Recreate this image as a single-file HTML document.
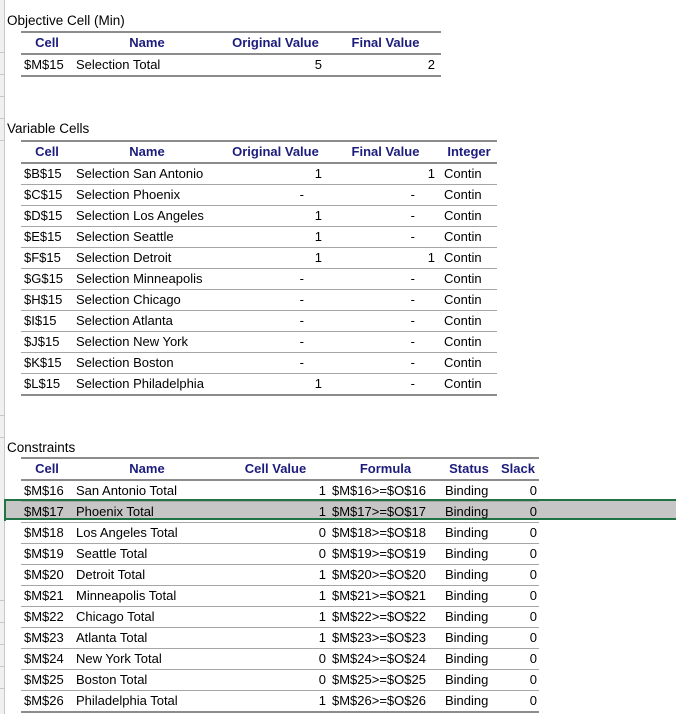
<!DOCTYPE html>
<html><head><meta charset="utf-8"><style>
body{margin:0;width:676px;height:714px;background:#fff;position:relative;overflow:hidden;font-family:"Liberation Sans",sans-serif;font-size:13px;color:#000}
.strip{position:absolute;left:0;top:0;width:4px;height:714px;background:#f0f0f0;border-right:1px solid #c8c8c8}
.tick{position:absolute;left:0;width:4px;height:1px;background:#c8c8c8}
.title{position:absolute;left:7px;font-size:13.5px}
table{position:absolute;left:21px;border-collapse:collapse;table-layout:fixed}
td{height:20px;padding:0;line-height:20px;white-space:nowrap;overflow:hidden;border-bottom:1px solid #a6a6a6}
tr.h td{color:#1c1c7c;font-weight:bold;text-align:center;border-top:2px solid #8c8c8c;border-bottom:2px solid #8c8c8c;height:19px}
tr.last td{border-bottom:2px solid #8c8c8c}
.r{text-align:right;padding-right:6px}
.l{padding-left:3px}
.d{text-align:right;padding-right:26px}
.sel{position:absolute;left:4px;top:499px;width:680px;height:21px;background:#c6c6c6;border-top:2px solid #217346;border-bottom:2px solid #217346;box-sizing:border-box}
.selh{position:absolute;left:4px;top:499px;width:2px;height:22px;background:#217346}
</style></head><body>
<div class="strip"></div>
<div class="tick" style="top:52px"></div><div class="tick" style="top:74px"></div><div class="tick" style="top:96px"></div><div class="tick" style="top:118px"></div><div class="tick" style="top:140px"></div><div class="tick" style="top:415px"></div><div class="tick" style="top:437px"></div><div class="tick" style="top:600px"></div><div class="tick" style="top:622px"></div><div class="tick" style="top:644px"></div><div class="tick" style="top:666px"></div><div class="tick" style="top:688px"></div>
<div class="sel"></div><div class="selh"></div>
<div class="title" style="top:13px">Objective Cell (Min)</div>
<table style="top:31px;width:420px">
<col style="width:52px"><col style="width:148px"><col style="width:109px"><col style="width:111px">
<tr class="h"><td>Cell</td><td>Name</td><td>Original Value</td><td>Final Value</td></tr>
<tr class="last"><td class="l">$M$15</td><td class="l">Selection Total</td><td class="r" style="padding-right:8px">5</td><td class="r">2</td></tr>
</table>
<div class="title" style="top:121px">Variable Cells</div>
<table style="top:140px;width:476px">
<col style="width:52px"><col style="width:148px"><col style="width:109px"><col style="width:111px"><col style="width:56px">
<tr class="h"><td>Cell</td><td>Name</td><td>Original Value</td><td>Final Value</td><td>Integer</td></tr>
<tr><td class="l">$B$15</td><td class="l">Selection San Antonio</td><td class="r" style="padding-right:8px">1</td><td class="r">1</td><td class="l">Contin</td></tr>
<tr><td class="l">$C$15</td><td class="l">Selection Phoenix</td><td class="d">-</td><td class="d">-</td><td class="l">Contin</td></tr>
<tr><td class="l">$D$15</td><td class="l">Selection Los Angeles</td><td class="r" style="padding-right:8px">1</td><td class="d">-</td><td class="l">Contin</td></tr>
<tr><td class="l">$E$15</td><td class="l">Selection Seattle</td><td class="r" style="padding-right:8px">1</td><td class="d">-</td><td class="l">Contin</td></tr>
<tr><td class="l">$F$15</td><td class="l">Selection Detroit</td><td class="r" style="padding-right:8px">1</td><td class="r">1</td><td class="l">Contin</td></tr>
<tr><td class="l">$G$15</td><td class="l">Selection Minneapolis</td><td class="d">-</td><td class="d">-</td><td class="l">Contin</td></tr>
<tr><td class="l">$H$15</td><td class="l">Selection Chicago</td><td class="d">-</td><td class="d">-</td><td class="l">Contin</td></tr>
<tr><td class="l">$I$15</td><td class="l">Selection Atlanta</td><td class="d">-</td><td class="d">-</td><td class="l">Contin</td></tr>
<tr><td class="l">$J$15</td><td class="l">Selection New York</td><td class="d">-</td><td class="d">-</td><td class="l">Contin</td></tr>
<tr><td class="l">$K$15</td><td class="l">Selection Boston</td><td class="d">-</td><td class="d">-</td><td class="l">Contin</td></tr>
<tr class="last"><td class="l">$L$15</td><td class="l">Selection Philadelphia</td><td class="r" style="padding-right:8px">1</td><td class="d">-</td><td class="l">Contin</td></tr>
</table>
<div class="title" style="top:440px">Constraints</div>
<table style="top:457px;width:518px">
<col style="width:52px"><col style="width:148px"><col style="width:109px"><col style="width:111px"><col style="width:56px"><col style="width:42px">
<tr class="h"><td>Cell</td><td>Name</td><td>Cell Value</td><td>Formula</td><td>Status</td><td>Slack</td></tr>
<tr><td class="l">$M$16</td><td class="l">San Antonio Total</td><td class="r" style="padding-right:4px">1</td><td class="l" style="padding-left:2px">$M$16&gt;=$O$16</td><td class="l" style="padding-left:4px">Binding</td><td class="r" style="padding-right:2px">0</td></tr>
<tr><td class="l">$M$17</td><td class="l">Phoenix Total</td><td class="r" style="padding-right:4px">1</td><td class="l" style="padding-left:2px">$M$17&gt;=$O$17</td><td class="l" style="padding-left:4px">Binding</td><td class="r" style="padding-right:2px">0</td></tr>
<tr><td class="l">$M$18</td><td class="l">Los Angeles Total</td><td class="r" style="padding-right:4px">0</td><td class="l" style="padding-left:2px">$M$18&gt;=$O$18</td><td class="l" style="padding-left:4px">Binding</td><td class="r" style="padding-right:2px">0</td></tr>
<tr><td class="l">$M$19</td><td class="l">Seattle Total</td><td class="r" style="padding-right:4px">0</td><td class="l" style="padding-left:2px">$M$19&gt;=$O$19</td><td class="l" style="padding-left:4px">Binding</td><td class="r" style="padding-right:2px">0</td></tr>
<tr><td class="l">$M$20</td><td class="l">Detroit Total</td><td class="r" style="padding-right:4px">1</td><td class="l" style="padding-left:2px">$M$20&gt;=$O$20</td><td class="l" style="padding-left:4px">Binding</td><td class="r" style="padding-right:2px">0</td></tr>
<tr><td class="l">$M$21</td><td class="l">Minneapolis Total</td><td class="r" style="padding-right:4px">1</td><td class="l" style="padding-left:2px">$M$21&gt;=$O$21</td><td class="l" style="padding-left:4px">Binding</td><td class="r" style="padding-right:2px">0</td></tr>
<tr><td class="l">$M$22</td><td class="l">Chicago Total</td><td class="r" style="padding-right:4px">1</td><td class="l" style="padding-left:2px">$M$22&gt;=$O$22</td><td class="l" style="padding-left:4px">Binding</td><td class="r" style="padding-right:2px">0</td></tr>
<tr><td class="l">$M$23</td><td class="l">Atlanta Total</td><td class="r" style="padding-right:4px">1</td><td class="l" style="padding-left:2px">$M$23&gt;=$O$23</td><td class="l" style="padding-left:4px">Binding</td><td class="r" style="padding-right:2px">0</td></tr>
<tr><td class="l">$M$24</td><td class="l">New York Total</td><td class="r" style="padding-right:4px">0</td><td class="l" style="padding-left:2px">$M$24&gt;=$O$24</td><td class="l" style="padding-left:4px">Binding</td><td class="r" style="padding-right:2px">0</td></tr>
<tr><td class="l">$M$25</td><td class="l">Boston Total</td><td class="r" style="padding-right:4px">0</td><td class="l" style="padding-left:2px">$M$25&gt;=$O$25</td><td class="l" style="padding-left:4px">Binding</td><td class="r" style="padding-right:2px">0</td></tr>
<tr class="last"><td class="l">$M$26</td><td class="l">Philadelphia Total</td><td class="r" style="padding-right:4px">1</td><td class="l" style="padding-left:2px">$M$26&gt;=$O$26</td><td class="l" style="padding-left:4px">Binding</td><td class="r" style="padding-right:2px">0</td></tr>
</table>
</body></html>
